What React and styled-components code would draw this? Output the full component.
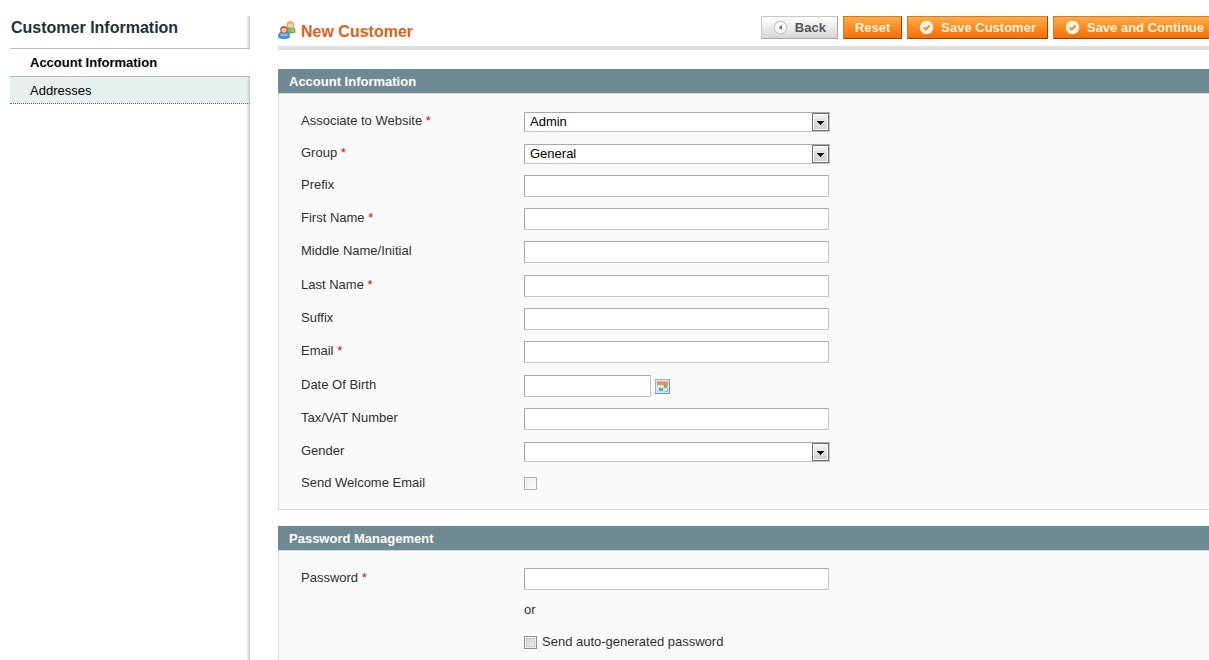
import React from "react";
import styled, { createGlobalStyle, css } from "styled-components";

const GlobalStyle = createGlobalStyle`
  * {
    box-sizing: border-box;
  }

  body {
    margin: 0;
    background: #fff;
    color: #303030;
    font-family: "Liberation Sans", Arial, sans-serif;
    font-size: 13px;
    line-height: 16px;
  }
`;

const Page = styled.div`
  display: flex;
  min-height: 100vh;
  padding: 16px 0 0 10px;
  overflow: hidden;
`;

const Sidebar = styled.aside`
  flex: 0 0 240px;
  background: linear-gradient(to right, #f0f0f0, #dcdcdc 50%, #c4c8c8) right / 3px 100% no-repeat;
`;

const SidebarTitle = styled.h3`
  margin: 0;
  height: 33px;
  padding: 2px 0 0 1px;
  border-bottom: 1px solid #bebebe;
  color: #253033;
  font-size: 16px;
  line-height: 20px;
`;

const TabList = styled.ul`
  margin: 0;
  padding: 0;
  list-style: none;
`;

const Tab = styled.a`
  display: block;
  padding: 6px 0 4px 20px;
  border-bottom: 1px dotted #5f6b6b;
  background: linear-gradient(to right, #e7efef, #b9c8c8) right / 3px 100% no-repeat #e7efef;
  color: #000;
  text-decoration: none;

  ${({ $active }) =>
    $active &&
    css`
      padding-bottom: 5px;
      border-bottom: 1px solid #b4bcbc;
      background: #fff;
      font-weight: bold;
    `}
`;

const Main = styled.main`
  display: flex;
  flex: 1;
  flex-direction: column;
  min-width: 0;
  margin-left: 28px;
`;

const Header = styled.header`
  display: flex;
  align-items: flex-start;
  justify-content: space-between;
  height: 34px;
  margin-bottom: 19px;
  border-bottom: 4px solid #dfdfdf;
`;

const Title = styled.h1`
  display: flex;
  align-items: flex-start;
  gap: 5px;
  margin: 0;
  padding-top: 5px;
  color: #e0601a;
  font-size: 16px;
  line-height: 22px;
`;

const Actions = styled.div`
  display: flex;
  gap: 5px;
  margin-right: -7px;
`;

const Button = styled.button`
  display: flex;
  align-items: center;
  gap: 7px;
  height: 23px;
  padding: 0 11px;
  border: 1px solid;
  border-color: #d27a2c #a04300 #a04300 #d27a2c;
  background: linear-gradient(#ffac47, #fb8c25 50%, #f26f07);
  color: #fff3dc;
  font: bold 13px/16px "Liberation Sans", Arial, sans-serif;
  white-space: nowrap;
  cursor: pointer;

  ${({ $back }) =>
    $back &&
    css`
      border-color: #c8c8c8 #a8a8a8 #a8a8a8 #c8c8c8;
      background: linear-gradient(#fff, #ececec 50%, #d6d6d6);
      color: #555;
    `}
`;

const PanelTitle = styled.h4`
  margin: 0;
  padding: 5px 11px 3px;
  background: #6f8992;
  color: #fff;
  font-size: 13px;
  line-height: 16px;
`;

const PanelBody = styled.div`
  flex: 1;
  padding: 17px 22px 4px;
  border: 1px solid #d6d6d6;
  border-right: 0;
  background: #fafafa;
`;

const Panel = styled.section`
  display: flex;
  flex-direction: column;
  margin-bottom: 16px;

  &:last-child {
    flex: 1;
    margin-bottom: 0;
  }

  &:last-child ${PanelBody} {
    border-bottom: 0;
  }
`;

const Row = styled.div`
  display: grid;
  grid-template-columns: 223px 1fr;
  align-items: start;
  min-height: ${({ $kind }) => ($kind === "text" ? 33 : 32)}px;

  &:nth-child(3n + 2) {
    min-height: ${({ $kind }) => ($kind === "text" ? 34 : 32)}px;
  }
`;

const Label = styled.label`
  padding-top: 2px;
`;

const Required = styled.span`
  color: #d40707;
`;

const Input = styled.input`
  display: block;
  width: ${({ $short }) => ($short ? 127 : 305)}px;
  height: 22px;
  padding: 2px 5px;
  border: 1px solid;
  border-color: #a8a8a8 #c4c4c4 #c4c4c4 #a8a8a8;
  background: #fff;
  font: inherit;
`;

const SelectBox = styled.div`
  position: relative;
  width: 306px;
  height: 20px;
  margin-top: 1px;

  svg {
    position: absolute;
    top: 1px;
    right: 1px;
    pointer-events: none;
  }
`;

const Select = styled.select`
  display: block;
  width: 100%;
  height: 100%;
  padding: 0 20px 0 5px;
  border: 1px solid;
  border-color: #a8a8a8 #c4c4c4 #c4c4c4 #a8a8a8;
  border-radius: 0;
  background: #fff;
  color: #000;
  font: inherit;
  appearance: none;
`;

const DateField = styled.div`
  display: flex;
  align-items: center;
  gap: 4px;
`;

const IconButton = styled.button`
  display: flex;
  padding: 0;
  border: 0;
  background: none;
  cursor: pointer;
`;

const Checkbox = styled.input`
  width: 13px;
  height: 13px;
  margin: 0;
  border: 1px solid #8e8f8f;
  background: linear-gradient(135deg, #cbcfd2, #f6f6f6);
  box-shadow: inset 0 0 0 1px #f4f4f4, inset 0 0 0 2px #c6cacc;
  appearance: none;

  &:disabled {
    border-color: #b1b1b1;
    background: linear-gradient(135deg, #ececec, #fcfcfc);
    box-shadow: none;
  }
`;

const CheckField = styled.div`
  display: flex;
  align-items: center;
  gap: 5px;
  padding-top: 4px;
`;

const PasswordField = styled.div`
  display: grid;
  gap: 12px;

  p {
    margin: 0;
  }
`;

function UsersIcon() {
  return (
    <svg width="18" height="18" viewBox="0 0 18 18" aria-hidden="true">
      <path d="M7 11.6V9Q7.4 6.4 10 6h4.2q2.5.4 2.9 3v2.6q-4.4 1.2-10.1 0z" fill="#7dbb58" stroke="#67a34c" strokeWidth=".6" />
      <path d="M13.5 7.8q2 .2 2.2 2v1.1h-2.2z" fill="#a5d480" />
      <path d="M8.6 4.2Q8.8.4 12.4.3q3.7.1 3.8 3.9-.1 3-3.8 3.1-3.7-.1-3.8-3.1z" fill="#dfa745" />
      <path d="M9.9 4.3q.1-1.6 1.1-2 1.7.7 3.4 0 .8.8.7 2.2-.3 2.3-2.6 2.4-2.4-.2-2.6-2.6z" fill="#fad4a4" />
      <path d="M.4 16.4V14q.4-2.7 3.1-3h5q2.8.3 3.1 3v2.4Q9.4 17.7 6 17.7T.4 16.4z" fill="#5290e2" stroke="#3b73c2" strokeWidth=".6" />
      <path d="M2 14.4q.2-1.9 1.8-2.1 2.2 1.4 4.4 0 1.7.3 1.8 2.1-3.8 1.3-8 0z" fill="#8abaf5" />
      <path d="M2.1 8.7Q2.3 5 6 4.9q3.7.1 3.9 3.8-.1 3.5-3.9 3.7-3.7-.2-3.9-3.7z" fill="#a9633f" />
      <path d="M3.3 9.1q.1-1.6 1.1-2.1 1.6.6 3.2 0 1.1.6 1.1 2.1-.2 2.5-2.7 2.7-2.5-.2-2.7-2.7z" fill="#f5bd94" />
    </svg>
  );
}

function BackIcon() {
  return (
    <svg width="15" height="15" viewBox="0 0 15 15" aria-hidden="true">
      <circle cx="7.5" cy="7.5" r="6.3" fill="#fafafa" stroke="#c6c6c6" strokeWidth="1.2" />
      <path d="M9 5v5L5.5 7.5z" fill="#777" />
    </svg>
  );
}

function CheckIcon() {
  return (
    <svg width="15" height="15" viewBox="0 0 15 15" aria-hidden="true">
      <circle cx="7.5" cy="7.5" r="6.7" fill="#fff5e6" />
      <path d="M4.6 7.4l2.1 2.2L10.5 5.5" fill="none" stroke="#ee8741" strokeWidth="2" />
    </svg>
  );
}

function ArrowIcon() {
  return (
    <svg width="17" height="18" viewBox="0 0 17 18" shapeRendering="crispEdges" aria-hidden="true">
      <defs>
        <linearGradient id="arrowFill" x1="0" y1="0" x2="0" y2="1">
          <stop offset="0" stopColor="#f2f2f2" />
          <stop offset="1" stopColor="#cfcfcf" />
        </linearGradient>
      </defs>
      <path d="M0 0h17v18H0z" fill="#707070" />
      <path d="M1 1h15v16H1z" fill="#fff" />
      <path d="M2 2h13v14H2z" fill="url(#arrowFill)" />
      <path d="M5 8h7v1h-1v1h-1v1H9v1H8v-1H7v-1H6V9H5z" fill="#000" />
    </svg>
  );
}

function CalendarIcon() {
  return (
    <svg width="15" height="15" viewBox="0 0 15 15" shapeRendering="crispEdges" aria-hidden="true">
      <path d="M0 0h15v15H0z" fill="#6d96c8" />
      <path d="M0 0h14v1H1v13H0z" fill="#8fb3dc" />
      <path d="M1 1h13v13H1z" fill="#d3e6fb" />
      <path d="M2 2h11v4H2z" fill="#f28b55" />
      <path d="M2 2h11v1H2z" fill="#f9aa79" />
      <path d="M2 6h11v7H2z" fill="#c9dcef" />
      <path d="M3 7h2v1H3zM6 7h2v1H6zM2 9h1v2H2zM10 10h2v2h-2z" fill="#f7fbff" />
      <path d="M9 6h3v3H9zM4 9h4v3H4z" fill="#62b56a" />
      <path d="M6 9h1v1H6zM9 8h1v1H9z" fill="#a3d6a4" />
      <path d="M12 10h1v3h-3v-1h2z" fill="#8eb4df" />
    </svg>
  );
}

const fields = [
  { id: "website", label: "Associate to Website", kind: "select", value: "Admin", required: true },
  { id: "group", label: "Group", kind: "select", value: "General", required: true },
  { id: "prefix", label: "Prefix", kind: "text" },
  { id: "firstname", label: "First Name", kind: "text", required: true },
  { id: "middlename", label: "Middle Name/Initial", kind: "text" },
  { id: "lastname", label: "Last Name", kind: "text", required: true },
  { id: "suffix", label: "Suffix", kind: "text" },
  { id: "email", label: "Email", kind: "text", required: true },
  { id: "dob", label: "Date Of Birth", kind: "text", date: true },
  { id: "taxvat", label: "Tax/VAT Number", kind: "text" },
  { id: "gender", label: "Gender", kind: "select", value: "" },
  { id: "welcome", label: "Send Welcome Email", kind: "checkbox" },
];

function FieldLabel({ id, label, required }) {
  return (
    <Label htmlFor={id}>
      {label} {required && <Required>*</Required>}
    </Label>
  );
}

function FieldControl({ id, kind, value, date }) {
  if (kind === "select") {
    return (
      <SelectBox>
        <Select id={id}>
          <option>{value}</option>
        </Select>
        <ArrowIcon />
      </SelectBox>
    );
  }

  if (kind === "checkbox") {
    return (
      <CheckField>
        <Checkbox id={id} type="checkbox" disabled />
      </CheckField>
    );
  }

  if (date) {
    return (
      <DateField>
        <Input id={id} type="text" $short />
        <IconButton type="button" aria-label="Select Date">
          <CalendarIcon />
        </IconButton>
      </DateField>
    );
  }

  return <Input id={id} type="text" />;
}

function App() {
  return (
    <>
      <GlobalStyle />
      <Page>
        <Sidebar>
          <SidebarTitle>Customer Information</SidebarTitle>
          <TabList>
            <li>
              <Tab href="#account" $active>
                Account Information
              </Tab>
            </li>
            <li>
              <Tab href="#addresses">Addresses</Tab>
            </li>
          </TabList>
        </Sidebar>

        <Main>
          <Header>
            <Title>
              <UsersIcon />
              New Customer
            </Title>
            <Actions>
              <Button type="button" $back>
                <BackIcon />
                Back
              </Button>
              <Button type="button">Reset</Button>
              <Button type="button">
                <CheckIcon />
                Save Customer
              </Button>
              <Button type="button">
                <CheckIcon />
                Save and Continue
              </Button>
            </Actions>
          </Header>

          <Panel id="account">
            <PanelTitle>Account Information</PanelTitle>
            <PanelBody>
              {fields.map((field) => (
                <Row key={field.id} $kind={field.kind}>
                  <FieldLabel {...field} />
                  <FieldControl {...field} />
                </Row>
              ))}
            </PanelBody>
          </Panel>

          <Panel>
            <PanelTitle>Password Management</PanelTitle>
            <PanelBody>
              <Row $kind="text">
                <FieldLabel id="password" label="Password" required />
                <PasswordField>
                  <Input id="password" type="password" />
                  <p>or</p>
                  <CheckField>
                    <Checkbox id="autopassword" type="checkbox" />
                    <label htmlFor="autopassword">Send auto-generated password</label>
                  </CheckField>
                </PasswordField>
              </Row>
            </PanelBody>
          </Panel>
        </Main>
      </Page>
    </>
  );
}

export default App;
